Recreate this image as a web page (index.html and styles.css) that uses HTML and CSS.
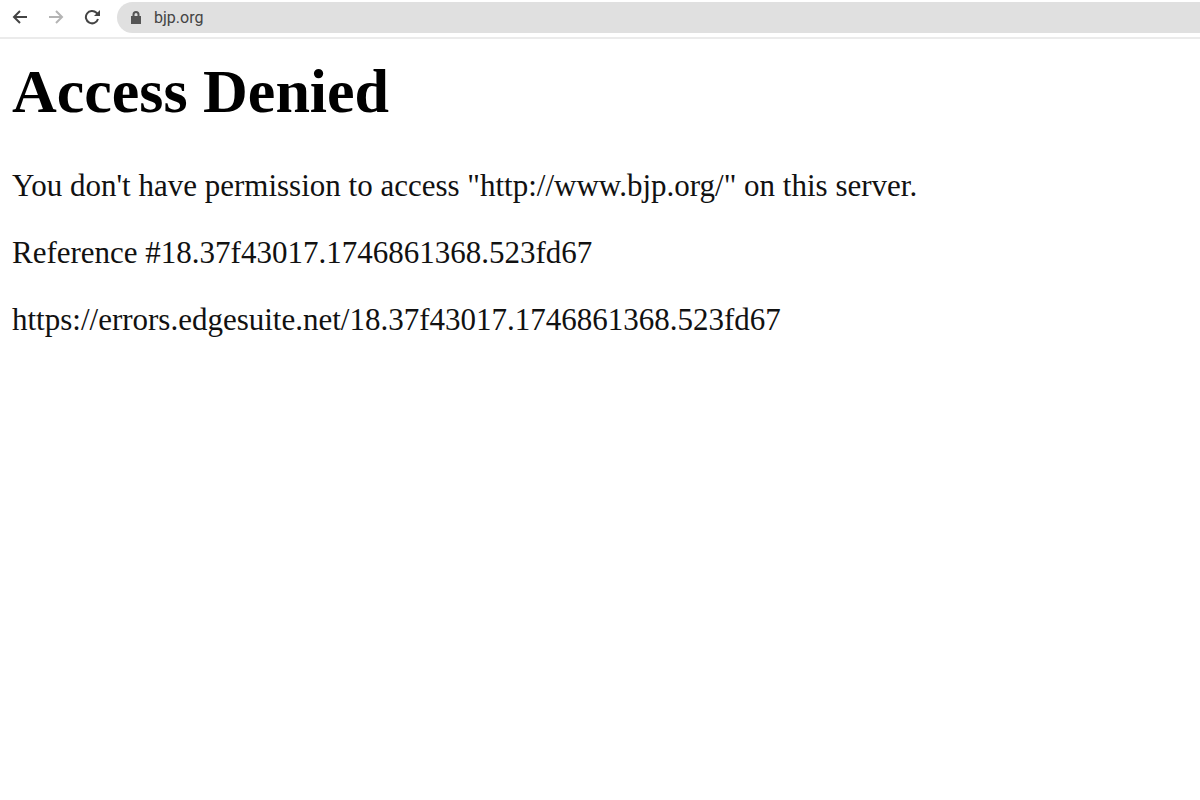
FILE: index.html
```html
<!DOCTYPE html>
<html lang="en">
<head>
    <meta charset="UTF-8">
    <meta name="viewport" content="width=device-width, initial-scale=1.0">
    <title>Access Denied</title>
    <link rel="stylesheet" href="styles.css">
</head>
<body>
    <header class="toolbar">
        <button class="nav-btn" type="button" aria-label="Back">
            <svg viewBox="0 0 16 16"><path d="M15 8H2M8 2L2 8l6 6"/></svg>
        </button>
        <button class="nav-btn nav-btn-off" type="button" aria-label="Forward">
            <svg viewBox="0 0 16 16"><path d="M1 8h13M8 2l6 6-6 6"/></svg>
        </button>
        <button class="nav-btn" type="button" aria-label="Reload">
            <svg viewBox="0 0 16 16"><path d="M14 10A6.200 6.200 0 1 1 12.500 3.800L14 5.500"/><path class="fill" d="M16 1v6h-6z"/></svg>
        </button>
        <label class="address">
            <svg class="lock" viewBox="0 0 10 14"><path class="fill" d="M0 5h10v8H0z"/><path d="M2.500 6V3.500a2.500 2.500 0 0 1 5 0V6"/></svg>
            <input class="url" type="text" value="bjp.org" aria-label="Address">
        </label>
    </header>
    <main class="page">
        <h1>Access Denied</h1>
        <p>You don't have permission to access "http://www.bjp.org/" on this server.</p>
        <p>Reference #18.37f43017.1746861368.523fd67</p>
        <p>https://errors.edgesuite.net/18.37f43017.1746861368.523fd67</p>
    </main>
</body>
</html>
```
FILE: styles.css
```css
body{
    margin: 0;
    background-color: #fff;
    font-family: "Liberation Serif", "Times New Roman", serif;
    color: #000;
}
.toolbar{
    display: flex;
    align-items: center;
    gap: 20px;
    padding: 2px 0 4px 12px;
    border-bottom: 2px solid #ebebeb;
}
.nav-btn{
    display: flex;
    padding: 0 0 1px;
    border: 0;
    background: none;
    color: #444;
}
.nav-btn-off{
    color: #b4b4b4;
}
svg{
    width: 16px;
    height: 16px;
    fill: none;
    stroke: currentColor;
    stroke-width: 2;
}
.fill{
    fill: currentColor;
    stroke: none;
}
.address{
    display: flex;
    flex: 1;
    align-items: center;
    gap: 13px;
    height: 31px;
    margin-left: -3px;
    padding-left: 14px;
    border-radius: 16px 0 0 16px;
    background-color: #e0e0e0;
    color: #555;
}
.lock{
    width: 10px;
    height: 14px;
}
.url{
    flex: 1;
    padding: 0;
    border: 0;
    outline: 0;
    background: none;
    font-family: Roboto, sans-serif;
    font-size: 16px;
    color: #444;
}
.page{
    padding: 16px 12px;
}
h1{
    margin: 0 0 41px;
    font-size: 62px;
    line-height: 72px;
}
p{
    margin: 0 0 31px;
    font-size: 31px;
    line-height: 36px;
    color: #111;
}
```
